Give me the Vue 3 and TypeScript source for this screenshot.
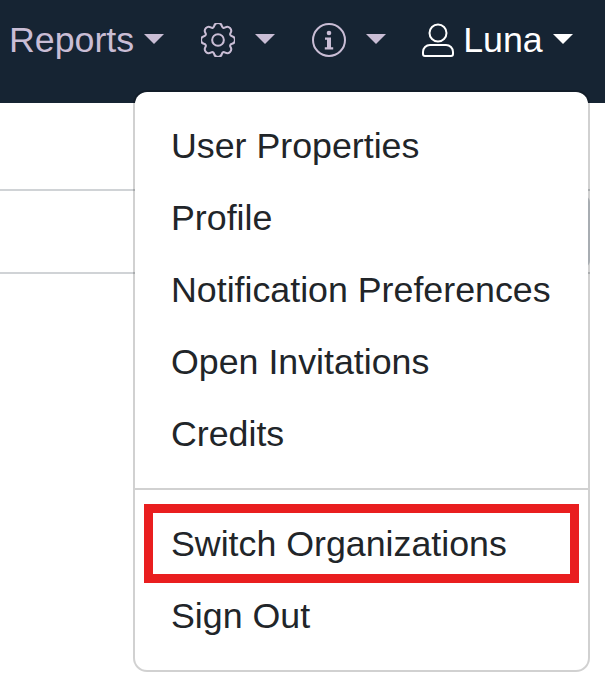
<template>
  <div class="page">
    <nav class="navbar">
      <a class="nav-link">Reports<span class="caret"></span></a>
      <a class="nav-link">
        <svg class="icon" viewBox="0 0 16 16" fill="none" stroke="currentColor" stroke-width="0.95">
          <circle cx="8" cy="8" r="2.75" />
          <path d="M9.796 1.343c-.527-1.79-3.065-1.79-3.592 0l-.094.319a.873.873 0 0 1-1.255.52l-.292-.16c-1.64-.892-3.433.902-2.54 2.541l.159.292a.873.873 0 0 1-.52 1.255l-.319.094c-1.79.527-1.79 3.065 0 3.592l.319.094a.873.873 0 0 1 .52 1.255l-.16.292c-.892 1.64.901 3.434 2.541 2.54l.292-.159a.873.873 0 0 1 1.255.52l.094.319c.527 1.79 3.065 1.79 3.592 0l.094-.319a.873.873 0 0 1 1.255-.52l.292.16c1.64.893 3.434-.902 2.54-2.541l-.159-.292a.873.873 0 0 1 .52-1.255l.319-.094c1.79-.527 1.79-3.065 0-3.592l-.319-.094a.873.873 0 0 1-.52-1.255l.16-.292c.893-1.64-.902-3.433-2.541-2.54l-.292.159a.873.873 0 0 1-1.255-.52l-.094-.319z" />
        </svg>
        <span class="caret caret--icon"></span>
      </a>
      <a class="nav-link">
        <svg class="icon" viewBox="0 0 34 34">
          <circle cx="17" cy="17" r="16" fill="none" stroke="currentColor" stroke-width="2" />
          <circle cx="17" cy="10" r="2.3" fill="currentColor" />
          <path fill="currentColor" d="M13 14.5h6v9.7h2.2v2.3h-8.4v-2.3H15v-7.4h-2z" />
        </svg>
        <span class="caret caret--icon"></span>
      </a>
      <a class="nav-link nav-link--user">
        <svg class="icon icon--user" viewBox="0 0 32 34" fill="none" stroke="currentColor" stroke-width="2">
          <circle cx="16" cy="10" r="8.5" />
          <path d="M8 22h16a7 7 0 0 1 7 7v2a2 2 0 0 1-2 2H3a2 2 0 0 1-2-2v-2a7 7 0 0 1 7-7z" />
        </svg>
        <span class="user-name">Luna</span><span class="caret"></span>
      </a>
    </nav>

    <div class="rows">
      <div class="row row--first"></div>
      <div class="row row--second"><div class="row-control"></div></div>
    </div>

    <ul class="dropdown">
      <li v-for="item in mainItems" :key="item" class="dropdown-item">{{ item }}</li>
      <li class="divider"></li>
      <li class="dropdown-item dropdown-item--marked">
        Switch Organizations
        <span class="highlight"></span>
      </li>
      <li class="dropdown-item">Sign Out</li>
    </ul>
  </div>
</template>

<script setup lang="ts">
const mainItems: string[] = [
  'User Properties',
  'Profile',
  'Notification Preferences',
  'Open Invitations',
  'Credits',
]
</script>

<style>
html,
body {
  margin: 0;
  background: #fff;
}
</style>

<style scoped>
.page {
  position: relative;
  width: 605px;
  height: 681px;
  overflow: hidden;
  font-family: 'Liberation Sans', Arial, sans-serif;
  font-size: 35.75px;
  line-height: 54px;
}

.navbar {
  display: flex;
  gap: 37px;
  height: 103px;
  box-sizing: border-box;
  padding: 13px 0 0 9px;
  background: #162433;
  color: #c9bdd5;
}

.nav-link {
  display: flex;
  flex-shrink: 0;
  align-items: center;
  height: 54px;
}

.nav-link--user {
  margin-left: -1px;
  color: #fff;
}

.icon {
  width: 34px;
  height: 34px;
}

.icon--user {
  width: 32px;
  height: 34px;
  margin-right: 9px;
}

.caret {
  width: 0;
  height: 0;
  margin-left: 10px;
  margin-bottom: 3px;
  border-top: 10.8px solid currentColor;
  border-left: 10.8px solid transparent;
  border-right: 10.8px solid transparent;
}

.caret--icon {
  margin-left: 20px;
}

.rows {
  width: 590px;
}

.row {
  box-sizing: border-box;
  border-bottom: 2px solid #d0d3d6;
}

.row--first {
  height: 88px;
}

.row--second {
  display: flex;
  justify-content: flex-end;
  align-items: center;
  height: 83px;
}

.row-control {
  width: 40px;
  height: 71px;
  box-sizing: border-box;
  border: 2px solid #ced4da;
  border-radius: 6px;
}

.dropdown {
  position: absolute;
  top: 90px;
  left: 133px;
  width: 457px;
  box-sizing: border-box;
  margin: 0;
  padding: 18px 0;
  list-style: none;
  color: #212529;
  background: #fff;
  background-clip: padding-box;
  border: 2px solid rgba(0, 0, 0, 0.18);
  border-radius: 14px;
}

.dropdown-item {
  position: relative;
  padding: 9px 36px;
  white-space: nowrap;
}

.divider {
  height: 0;
  margin: 18px 0;
  border-top: 2px solid rgba(0, 0, 0, 0.18);
}

.highlight {
  position: absolute;
  top: -4px;
  left: 9px;
  right: 9px;
  bottom: -3px;
  border: 9px solid #e91e1f;
}
</style>
